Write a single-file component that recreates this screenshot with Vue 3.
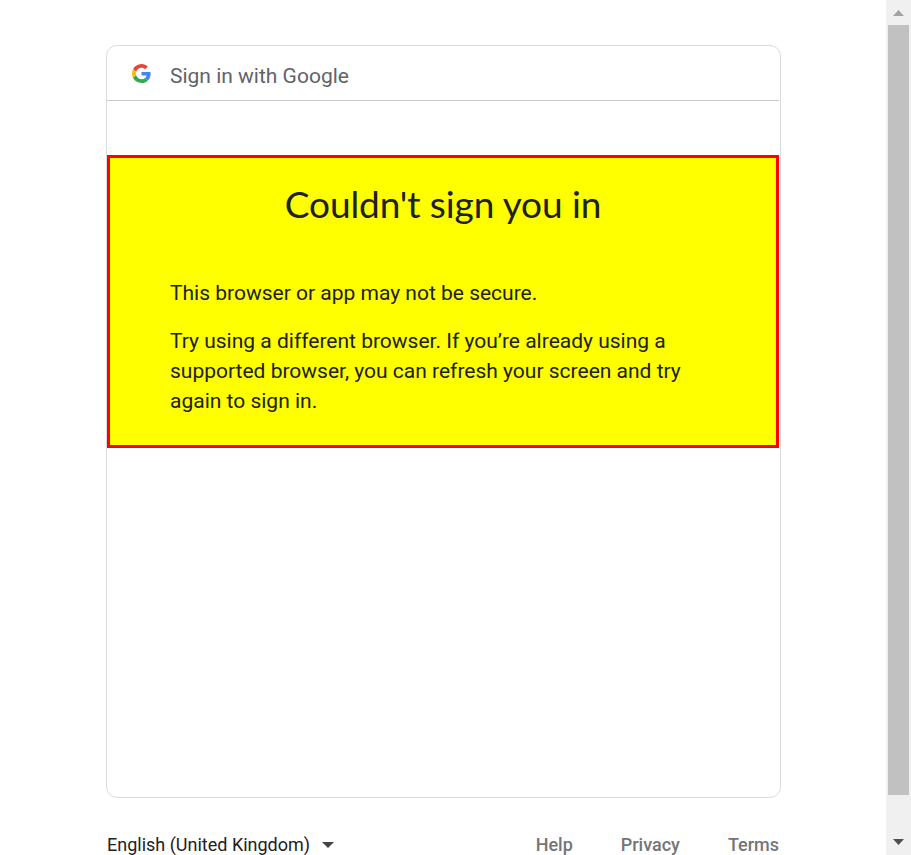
<script setup>
const links = ['Help', 'Privacy', 'Terms']
</script>

<template>
  <div class="page">
    <main class="content">
      <section class="card">
        <header class="brand">
          <svg class="logo" viewBox="0 0 48 48" aria-hidden="true">
            <path fill="#ea4335" d="M24 9.5c3.54 0 6.71 1.22 9.21 3.6l6.85-6.85C35.9 2.38 30.47 0 24 0 14.62 0 6.51 5.38 2.56 13.22l7.98 6.19C12.43 13.72 17.74 9.5 24 9.5z" />
            <path fill="#4285f4" d="M46.98 24.55c0-1.57-.15-3.09-.38-4.55H24v9.02h12.94c-.58 2.96-2.26 5.48-4.78 7.18l7.73 6c4.51-4.18 7.09-10.36 7.09-17.65z" />
            <path fill="#fbbc05" d="M10.53 28.59c-.48-1.45-.76-2.99-.76-4.59s.27-3.14.76-4.59l-7.98-6.19C.92 16.46 0 20.12 0 24c0 3.88.92 7.54 2.56 10.78l7.97-6.19z" />
            <path fill="#34a853" d="M24 48c6.48 0 11.93-2.13 15.89-5.81l-7.73-6c-2.15 1.45-4.92 2.3-8.16 2.3-6.26 0-11.57-4.22-13.47-9.91l-7.98 6.19C6.51 42.62 14.62 48 24 48z" />
          </svg>
          <span class="brand-text">Sign in with Google</span>
        </header>
        <div class="notice">
          <h1 class="title">Couldn't sign you in</h1>
          <p>This browser or app may not be secure.</p>
          <p>Try using a different browser. If you’re already using a<br>supported browser, you can refresh your screen and try<br>again to sign in.</p>
        </div>
      </section>
      <footer class="footer">
        <div class="language">
          <span>English (United Kingdom)</span>
          <svg class="caret" viewBox="0 0 12 6" aria-hidden="true"><path d="M0 0h12L6 6z" fill="#444" /></svg>
        </div>
        <nav class="links">
          <a v-for="link in links" :key="link">{{ link }}</a>
        </nav>
      </footer>
    </main>
    <aside class="scrollbar">
      <svg class="arrow" viewBox="0 0 11 6" aria-hidden="true"><path d="M5.5 0L11 6H0z" fill="#a3a3a3" /></svg>
      <div class="thumb"></div>
      <svg class="arrow arrow-down" viewBox="0 0 11 6" aria-hidden="true"><path d="M0 0h11L5.5 6z" fill="#505050" /></svg>
    </aside>
  </div>
</template>

<style>
body {
  overflow: hidden;
}
</style>

<style scoped>
.page {
  display: flex;
  justify-content: space-between;
  width: 911px;
  height: 855px;
  overflow: hidden;
  background: #fff;
  font-family: Roboto, "Liberation Sans", sans-serif;
  color: #202124;
}
.content {
  width: 675px;
  margin-left: 106px;
  padding-top: 45px;
}
.card {
  box-sizing: border-box;
  height: 753px;
  border: 1px solid #dadce0;
  border-radius: 11px;
  padding-right: 1px;
}
.brand {
  box-sizing: border-box;
  display: flex;
  align-items: flex-start;
  height: 55px;
  padding: 18px 0 0 25px;
  border-bottom: 1px solid #c8c8c8;
}
.logo {
  width: 19px;
  height: 19px;
}
.brand-text {
  margin-left: 19px;
  color: #5f6368;
  font-size: 21px;
  line-height: 24px;
}
.notice {
  box-sizing: border-box;
  height: 293px;
  margin-top: 54px;
  padding: 22px 60px 0;
  border: 3px solid #f00;
  background: #ff0;
}
.title {
  margin: 0 0 50px;
  font-family: Lato, "Liberation Sans", sans-serif;
  font-size: 37px;
  font-weight: 400;
  line-height: 48px;
  letter-spacing: -0.1px;
  text-align: center;
  white-space: nowrap;
}
.notice p {
  margin: 0 0 18px;
  font-size: 21px;
  line-height: 30px;
  white-space: nowrap;
}
.footer {
  display: flex;
  justify-content: space-between;
  padding: 35px 2px 0 1px;
  font-size: 18px;
  line-height: 24px;
}
.language {
  display: flex;
  align-items: center;
  gap: 12px;
}
.caret {
  width: 12px;
  height: 6px;
}
.links {
  display: flex;
  gap: 48px;
  color: #757575;
  font-weight: 500;
}
.scrollbar {
  display: flex;
  flex-direction: column;
  align-items: center;
  box-sizing: border-box;
  width: 25px;
  padding: 10px 2px 0;
  background: #f0f0f0;
}
.arrow {
  flex: none;
  width: 11px;
  height: 6px;
}
.thumb {
  flex: none;
  align-self: stretch;
  height: 770px;
  margin: 9px 0 44px;
  background: #c1c1c1;
}
</style>
